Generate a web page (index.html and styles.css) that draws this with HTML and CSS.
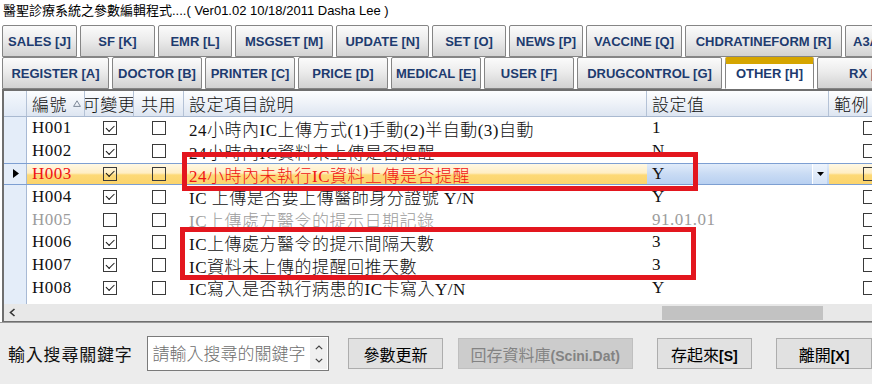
FILE: index.html
```html
<!DOCTYPE html>
<html lang="zh-Hant">
<head>
  <meta charset="UTF-8" />
  <title>參數編輯程式</title>
  <link rel="stylesheet" href="styles.css">
</head>
<body>
  <div class="window">
    <div class="title">醫聖診療系統之參數編輯程式....( Ver01.02 10/18/2011 Dasha Lee )</div>

    <div class="tabs">
      <div class="tab-row">
        <div class="tab w75">SALES [J]</div>
        <div class="tab w75">SF [K]</div>
        <div class="tab w74">EMR [L]</div>
        <div class="tab w98">MSGSET [M]</div>
        <div class="tab w93">UPDATE [N]</div>
        <div class="tab w74">SET [O]</div>
        <div class="tab w74">NEWS [P]</div>
        <div class="tab w96">VACCINE [Q]</div>
        <div class="tab w157">CHDRATINEFORM [R]</div>
        <div class="tab w66 left">A3A [S]</div>
      </div>
      <div class="tab-row">
        <div class="tab w107">REGISTER [A]</div>
        <div class="tab w90">DOCTOR [B]</div>
        <div class="tab w90">PRINTER [C]</div>
        <div class="tab w90">PRICE [D]</div>
        <div class="tab w90">MEDICAL [E]</div>
        <div class="tab w90">USER [F]</div>
        <div class="tab w145">DRUGCONTROL [G]</div>
        <div class="tab w89 active">OTHER [H]</div>
        <div class="tab w98">RX [I]</div>
      </div>
    </div>

    <div class="grid">
      <div class="grid-head">
        <div class="hc col-rh"></div>
        <div class="hc col-id">編號<svg class="sort" width="8" height="7" viewBox="0 0 8 7"><polygon points="4,0.8 7.4,6.4 0.6,6.4" fill="none" stroke="#7d8898" stroke-width="1"/></svg></div>
        <div class="hc col-var center">可變更</div>
        <div class="hc col-share center">共用</div>
        <div class="hc col-desc">設定項目說明</div>
        <div class="hc col-val">設定值</div>
        <div class="hc col-ex">範例</div>
      </div>

      <div class="grid-body">
        <div class="row">
          <div class="c col-rh"></div>
          <div class="c col-id">H001</div>
          <div class="c col-var center"><span class="cb on"></span></div>
          <div class="c col-share center"><span class="cb"></span></div>
          <div class="c col-desc">24小時內IC上傳方式(1)手動(2)半自動(3)自動</div>
          <div class="c col-val">1</div>
          <div class="c col-ex"><span class="cb"></span></div>
        </div>
        <div class="row">
          <div class="c col-rh"></div>
          <div class="c col-id">H002</div>
          <div class="c col-var center"><span class="cb on"></span></div>
          <div class="c col-share center"><span class="cb"></span></div>
          <div class="c col-desc">24小時內IC資料未上傳是否提醒</div>
          <div class="c col-val">N</div>
          <div class="c col-ex"><span class="cb"></span></div>
        </div>
        <div class="row sel">
          <div class="c col-rh"><svg width="6" height="9" viewBox="0 0 6 9"><polygon points="0,0 6,4.5 0,9" fill="#000"/></svg></div>
          <div class="c col-id red">H003</div>
          <div class="c col-var center"><span class="cb on"></span></div>
          <div class="c col-share center"><span class="cb"></span></div>
          <div class="c col-desc red">24小時內未執行IC資料上傳是否提醒</div>
          <div class="c col-val edit">Y<span class="dd"><svg width="7" height="4" viewBox="0 0 7 4"><polygon points="0,0 7,0 3.5,4" fill="#000"/></svg></span></div>
          <div class="c col-ex"><span class="cb"></span></div>
        </div>
        <div class="row">
          <div class="c col-rh"></div>
          <div class="c col-id">H004</div>
          <div class="c col-var center"><span class="cb on"></span></div>
          <div class="c col-share center"><span class="cb"></span></div>
          <div class="c col-desc">IC 上傳是否要上傳醫師身分證號 Y/N</div>
          <div class="c col-val">Y</div>
          <div class="c col-ex"><span class="cb"></span></div>
        </div>
        <div class="row off">
          <div class="c col-rh"></div>
          <div class="c col-id">H005</div>
          <div class="c col-var center"><span class="cb"></span></div>
          <div class="c col-share center"><span class="cb"></span></div>
          <div class="c col-desc">IC上傳處方醫令的提示日期記錄</div>
          <div class="c col-val">91.01.01</div>
          <div class="c col-ex"><span class="cb"></span></div>
        </div>
        <div class="row">
          <div class="c col-rh"></div>
          <div class="c col-id">H006</div>
          <div class="c col-var center"><span class="cb on"></span></div>
          <div class="c col-share center"><span class="cb"></span></div>
          <div class="c col-desc">IC上傳處方醫令的提示間隔天數</div>
          <div class="c col-val">3</div>
          <div class="c col-ex"><span class="cb"></span></div>
        </div>
        <div class="row">
          <div class="c col-rh"></div>
          <div class="c col-id">H007</div>
          <div class="c col-var center"><span class="cb on"></span></div>
          <div class="c col-share center"><span class="cb"></span></div>
          <div class="c col-desc">IC資料未上傳的提醒回推天數</div>
          <div class="c col-val">3</div>
          <div class="c col-ex"><span class="cb"></span></div>
        </div>
        <div class="row">
          <div class="c col-rh"></div>
          <div class="c col-id">H008</div>
          <div class="c col-var center"><span class="cb on"></span></div>
          <div class="c col-share center"><span class="cb"></span></div>
          <div class="c col-desc">IC寫入是否執行病患的IC卡寫入Y/N</div>
          <div class="c col-val">Y</div>
          <div class="c col-ex"><span class="cb"></span></div>
        </div>
      </div>

      <div class="hscroll">
        <span class="arrow"><svg width="7" height="9" viewBox="0 0 7 9"><polyline points="5.5,1 1.5,4.5 5.5,8" fill="none" stroke="#333" stroke-width="1.6"/></svg></span>
        <span class="thumb"></span>
      </div>
    </div>

    <div class="footer">
      <span class="search-label">輸入搜尋關鍵字</span>
      <div class="search">
        <span class="placeholder">請輸入搜尋的關鍵字</span>
        <div class="spin">
          <svg width="8" height="5" viewBox="0 0 8 5"><polyline points="0.8,4.2 4,1 7.2,4.2" fill="none" stroke="#444" stroke-width="1.2"/></svg>
          <svg width="8" height="5" viewBox="0 0 8 5"><polyline points="0.8,0.8 4,4 7.2,0.8" fill="none" stroke="#444" stroke-width="1.2"/></svg>
        </div>
      </div>
      <button class="btn btn-update">參數更新</button>
      <button class="btn btn-restore" disabled>回存資料庫<span class="lat">(Scini.Dat)</span></button>
      <button class="btn btn-save">存起來<span class="lat">[S]</span></button>
      <button class="btn btn-exit">離開<span class="lat">[X]</span></button>
    </div>

    <!-- annotation boxes drawn over the grid -->
    <div class="mark mark-1"></div>
    <div class="mark mark-2"></div>
  </div>
</body>
</html>
```

FILE: styles.css
```css
* {
  margin: 0;
  padding: 0;
  box-sizing: border-box;
}

body {
  width: 872px;
  height: 384px;
  overflow: hidden;
  background: #fff;
}

.window {
  position: relative;
  width: 872px;
  height: 384px;
  overflow: hidden;
}

.title {
  height: 25px;
  line-height: 24px;
  padding-left: 3px;
  font: 13px "Liberation Sans", "Noto Sans CJK TC", sans-serif;
  color: #000;
  white-space: nowrap;
}

/* tabs */
.tab-row {
  display: flex;
  gap: 3px;
  padding-left: 2px;
  height: 32px;
}

.tab {
  flex: none;
  height: 32px;
  display: flex;
  align-items: center;
  justify-content: center;
  border: 1px solid #858585;
  border-radius: 2px 2px 0 0;
  background: linear-gradient(#fbfbfb, #ececec 45%, #d2d2d2);
  font: bold 13px "Liberation Sans", sans-serif;
  color: #1d3b6f;
  white-space: nowrap;
  overflow: hidden;
}

.tab.left {
  justify-content: flex-start;
  padding-left: 7px;
}

.tab.active {
  background: #fff;
  border-top: 7px solid #d5a500;
  border-bottom-color: #fff;
  padding-bottom: 6px;
}

.w66 { width: 66px; }
.w74 { width: 74px; }
.w75 { width: 75px; }
.w89 { width: 89px; }
.w90 { width: 90px; }
.w93 { width: 93px; }
.w96 { width: 96px; }
.w98 { width: 98px; }
.w107 { width: 107px; }
.w145 { width: 145px; }
.w157 { width: 157px; }

/* grid */
.grid {
  margin-left: 2px;
  border-left: 2px solid #6f6f6f;
  border-top: 2px solid #6f6f6f;
  overflow: hidden;
  font: 300 17px "Liberation Serif", "Noto Sans CJK TC", serif;
  letter-spacing: 0.5px;
  color: #111;
}

.grid-head {
  display: flex;
  height: 26px;
  background: linear-gradient(#fdfeff, #eef2f8 50%, #dde5f1);
  border-bottom: 1px solid #a9b9d0;
}

.hc {
  flex: none;
  display: flex;
  align-items: center;
  padding-left: 5px;
  border-right: 1px solid #b4c2d6;
  white-space: nowrap;
  overflow: hidden;
}

.hc.center {
  justify-content: center;
  padding-left: 0;
}

.grid-head .col-rh {
  background: linear-gradient(#f4f8fd, #dfe8f5);
}

.sort {
  margin-left: 6px;
}

.col-rh { width: 23px; }
.col-id { width: 58px; }
.col-var { width: 49px; }
.col-share { width: 50px; }
.col-desc { width: 463px; }
.col-val { width: 182px; }
.col-ex { width: 80px; }

.grid-body {
  height: 187px;
  background: linear-gradient(to right, #e4edf9 22px, #a8bad5 22px 23px, #fff 23px);
}

.row {
  display: flex;
  height: 22.8px;
}

.c {
  flex: none;
  display: flex;
  align-items: center;
  padding-left: 5px;
  white-space: nowrap;
  overflow: hidden;
}

.c.center {
  justify-content: center;
  padding-left: 0;
}

.c.col-rh {
  padding-left: 0;
  justify-content: center;
  background: #e4edf9;
  border-right: 1px solid #a8bad5;
}

.c.col-ex {
  padding-left: 34px;
}

.row.sel {
  border-top: 1px solid #7d9fd2;
  border-bottom: 1px solid #7d9fd2;
  background: linear-gradient(#fff8e4, #ffeec4 45%, #fdd977 55%, #fbd46c);
}

.row.sel .col-rh svg {
  margin-left: 2px;
}

.row.off {
  color: #9c9c9c;
}

.red {
  color: #f01414;
}

.col-val.edit {
  background: linear-gradient(#e1ecfa, #c9dbf4 50%, #b8d0f1);
  padding-right: 2px;
}

.dd {
  margin-left: auto;
  width: 15px;
  height: 100%;
  display: flex;
  align-items: center;
  justify-content: center;
  border-left: 1px solid #fff;
  background: linear-gradient(#eef4fc, #d3e2f6);
}

.cb {
  display: block;
  width: 14px;
  height: 14px;
  border: 1px solid #3a3a3a;
  background: #fff;
}

.row.sel .cb {
  background: transparent;
}

.cb.on::after {
  content: "";
  display: block;
  width: 7px;
  height: 3.5px;
  margin: 2.5px 0 0 2.5px;
  border-left: 1.5px solid #1a1a1a;
  border-bottom: 1.5px solid #1a1a1a;
  transform: rotate(-45deg);
}

.hscroll {
  display: flex;
  align-items: center;
  height: 18px;
  background: #e8e8e8;
  border-bottom: 1px solid #6f6f6f;
}

.arrow {
  width: 17px;
  display: flex;
  justify-content: center;
}

.thumb {
  margin-left: 641px;
  width: 161px;
  height: 14px;
  background: #c2c2c2;
}

/* footer */
.footer {
  display: flex;
  align-items: center;
  height: 62px;
  padding-left: 8px;
  background: #ececec;
  border-top: 1px solid #9a9a9a;
}

.search-label {
  font: 17px "Liberation Serif", "Noto Sans CJK TC", serif;
  letter-spacing: 0.8px;
  color: #111;
  white-space: nowrap;
}

.search {
  margin-left: 14px;
  width: 184px;
  height: 35px;
  display: flex;
  align-items: flex-start;
  border: 1px solid #7a7a7a;
  background: #fff;
}

.placeholder {
  flex: 1;
  padding: 3px 0 0 5px;
  font: 300 17px "Liberation Serif", "Noto Sans CJK TC", serif;
  color: #6e6e6e;
  white-space: nowrap;
  overflow: hidden;
}

.spin {
  width: 17px;
  height: 31px;
  margin: 1px 1px 0 0;
  display: flex;
  flex-direction: column;
  align-items: center;
  justify-content: center;
  gap: 8px;
  background: #f0f0f0;
}

.btn {
  height: 31px;
  border: 1px solid #adadad;
  background: #e1e1e1;
  font: 16px "Noto Sans CJK TC", sans-serif;
  color: #000;
  white-space: nowrap;
}

.btn .lat {
  font: bold 14px "Liberation Sans", sans-serif;
}

.btn:disabled {
  background: #cccccc;
  border-color: #bfbfbf;
  color: #838383;
}

.btn-update { margin-left: 19px; width: 95px; }
.btn-restore { margin-left: 15px; width: 176px; }
.btn-save { margin-left: 24px; width: 96px; }
.btn-exit { margin-left: 24px; width: 96px; flex: none; }

/* red annotation frames */
.mark {
  position: absolute;
  border: 5px solid #e3161e;
}

.mark-1 {
  left: 182px;
  top: 152px;
  width: 516px;
  height: 39px;
}

.mark-2 {
  left: 180px;
  top: 227px;
  width: 516px;
  height: 53px;
}
```
